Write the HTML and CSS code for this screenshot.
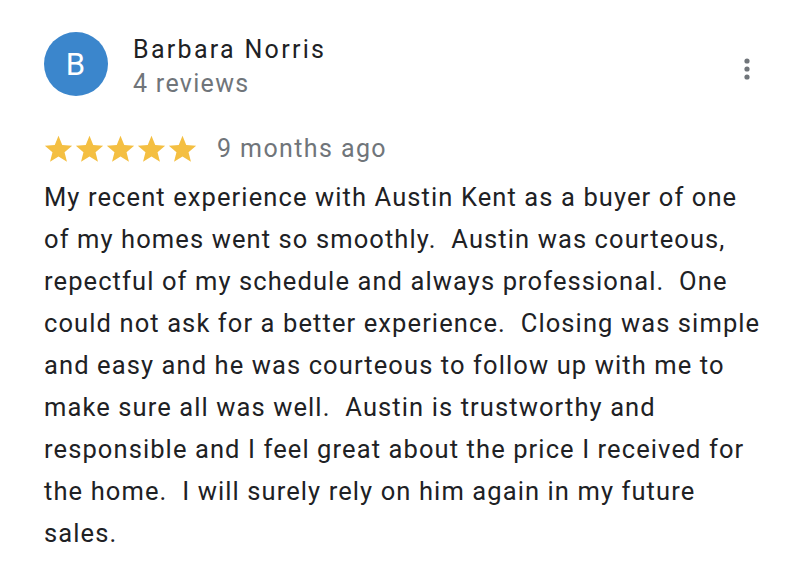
FILE: index.html
```html
<!DOCTYPE html>
<html lang="en">
<head>
  <meta charset="UTF-8">
  <title>Review</title>
  <link rel="stylesheet" href="styles.css">
</head>
<body>

<div class="review">
  <div class="review-head">
    <div class="avatar">B</div>
    <div class="author">
      <div class="name">Barbara Norris</div>
      <div class="count">4 reviews</div>
    </div>
    <button class="more" aria-label="More">
      <svg width="6" height="22" viewBox="0 0 6 22"><circle cx="3" cy="3" r="2.6"/><circle cx="3" cy="11" r="2.6"/><circle cx="3" cy="19" r="2.6"/></svg>
    </button>
  </div>

  <div class="meta">
    <span class="stars">
      <svg viewBox="0 0 24 24"><path d="M12 1.5l3.1 7.6 8.2.6-6.3 5.3 2 8-7-4.4-7 4.4 2-8L.7 9.7l8.2-.6z"/></svg>
      <svg viewBox="0 0 24 24"><path d="M12 1.5l3.1 7.6 8.2.6-6.3 5.3 2 8-7-4.4-7 4.4 2-8L.7 9.7l8.2-.6z"/></svg>
      <svg viewBox="0 0 24 24"><path d="M12 1.5l3.1 7.6 8.2.6-6.3 5.3 2 8-7-4.4-7 4.4 2-8L.7 9.7l8.2-.6z"/></svg>
      <svg viewBox="0 0 24 24"><path d="M12 1.5l3.1 7.6 8.2.6-6.3 5.3 2 8-7-4.4-7 4.4 2-8L.7 9.7l8.2-.6z"/></svg>
      <svg viewBox="0 0 24 24"><path d="M12 1.5l3.1 7.6 8.2.6-6.3 5.3 2 8-7-4.4-7 4.4 2-8L.7 9.7l8.2-.6z"/></svg>
    </span>
    <span class="date">9 months ago</span>
  </div>

  <p class="text">My recent experience with Austin Kent as a buyer of one of my homes went so smoothly.  Austin was courteous, repectful of my schedule and always professional.  One could not ask for a better experience.  Closing was simple and easy and he was courteous to follow up with me to make sure all was well.  Austin is trustworthy and responsible and I feel great about the price I received for the home.  I will surely rely on him again in my future sales.</p>
</div>

</body>
</html>
```

FILE: styles.css
```css
body { margin:0; background:#fff; font-family: Roboto, "Noto Sans", Arial, sans-serif; color:#202124; }
.review { padding:32px 0 0 44px; width:720px; }
.review-head { display:flex; align-items:flex-start; }
.avatar { width:64px; height:64px; border-radius:50%; background:#3b86cc; color:#fff; font-size:31px; letter-spacing:1px; display:flex; align-items:center; justify-content:center; flex:none; }
.author { margin-left:25px; flex:1; }
.name { font-size:25px; line-height:34px; margin-top:1px; letter-spacing:2.3px; }
.count { font-size:25px; line-height:34px; color:#70757a; letter-spacing:1.3px; }
.more { background:none; border:0; padding:0; margin:26px 14px 0 0; fill:#70757a; cursor:pointer; }
.meta { display:flex; align-items:center; margin-top:30px; height:34px; }
.stars { display:flex; gap:2px; }
.stars svg { width:29px; height:29px; fill:#f4bf42; }
.date { margin-left:20px; font-size:25px; color:#70757a; letter-spacing:1.4px; }
.text { margin:11px 0 0; font-size:25.5px; line-height:42px; white-space:pre-wrap; letter-spacing:1.1px; }
```
